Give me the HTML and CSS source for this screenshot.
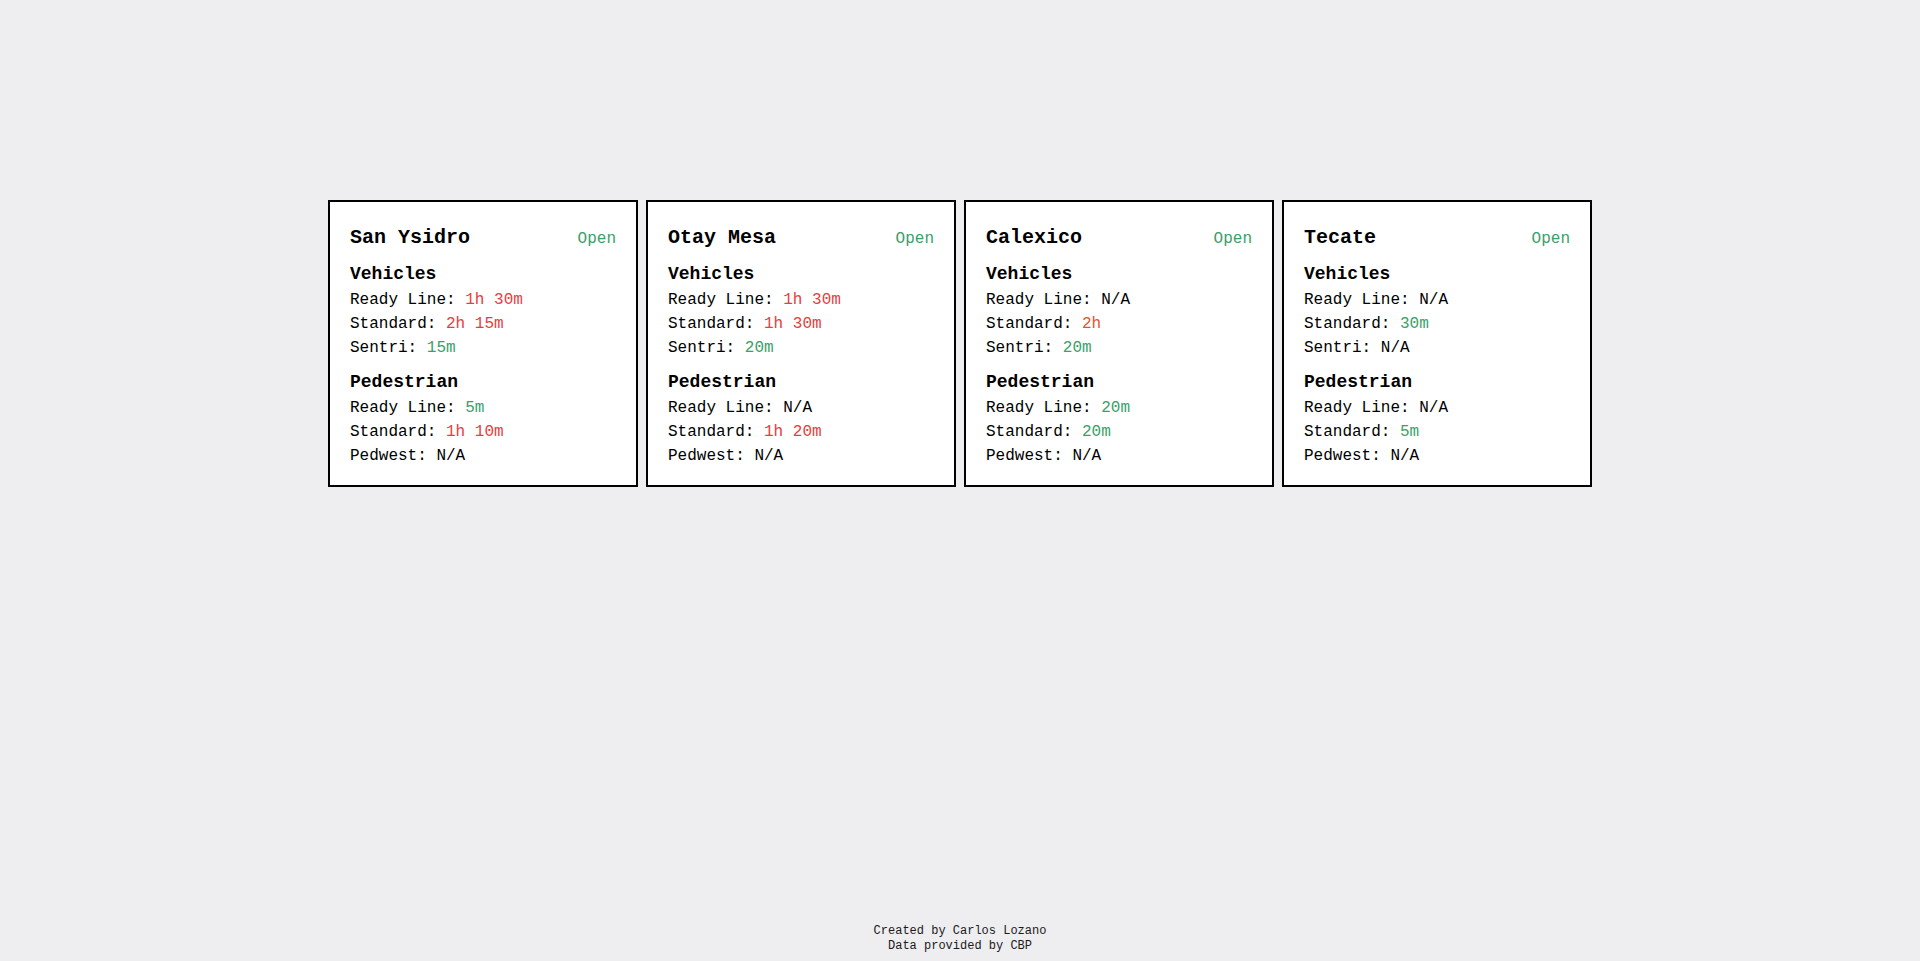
FILE: index.html
```html
<!DOCTYPE html>
<html lang="en">
<head>
<meta charset="utf-8">
<title>Border Wait Times</title>
<link rel="stylesheet" href="styles.css">
</head>
<body>
<main class="page">
  <section class="cards">
    <article class="card">
      <div class="card-head"><h2 class="port">San Ysidro</h2><span class="status">Open</span></div>
      <h3 class="group">Vehicles</h3>
      <p class="row">Ready Line: <span class="red">1h 30m</span></p>
      <p class="row">Standard: <span class="red">2h 15m</span></p>
      <p class="row">Sentri: <span class="green">15m</span></p>
      <h3 class="group">Pedestrian</h3>
      <p class="row">Ready Line: <span class="green">5m</span></p>
      <p class="row">Standard: <span class="red">1h 10m</span></p>
      <p class="row">Pedwest: N/A</p>
    </article>
    <article class="card">
      <div class="card-head"><h2 class="port">Otay Mesa</h2><span class="status">Open</span></div>
      <h3 class="group">Vehicles</h3>
      <p class="row">Ready Line: <span class="red">1h 30m</span></p>
      <p class="row">Standard: <span class="red">1h 30m</span></p>
      <p class="row">Sentri: <span class="green">20m</span></p>
      <h3 class="group">Pedestrian</h3>
      <p class="row">Ready Line: N/A</p>
      <p class="row">Standard: <span class="red">1h 20m</span></p>
      <p class="row">Pedwest: N/A</p>
    </article>
    <article class="card">
      <div class="card-head"><h2 class="port">Calexico</h2><span class="status">Open</span></div>
      <h3 class="group">Vehicles</h3>
      <p class="row">Ready Line: N/A</p>
      <p class="row">Standard: <span class="orange">2h</span></p>
      <p class="row">Sentri: <span class="green">20m</span></p>
      <h3 class="group">Pedestrian</h3>
      <p class="row">Ready Line: <span class="green">20m</span></p>
      <p class="row">Standard: <span class="green">20m</span></p>
      <p class="row">Pedwest: N/A</p>
    </article>
    <article class="card">
      <div class="card-head"><h2 class="port">Tecate</h2><span class="status">Open</span></div>
      <h3 class="group">Vehicles</h3>
      <p class="row">Ready Line: N/A</p>
      <p class="row">Standard: <span class="green">30m</span></p>
      <p class="row">Sentri: N/A</p>
      <h3 class="group">Pedestrian</h3>
      <p class="row">Ready Line: N/A</p>
      <p class="row">Standard: <span class="green">5m</span></p>
      <p class="row">Pedwest: N/A</p>
    </article>
  </section>
</main>
<footer class="footer">
  <p>Created by Carlos Lozano</p>
  <p>Data provided by CBP</p>
</footer>
</body>
</html>
```

FILE: styles.css
```css
html, body {
  margin: 0;
  padding: 0;
}
body {
  background: #eeedf0;
  color: #000;
  font-family: "Liberation Mono", "DejaVu Sans Mono", monospace;
  min-height: 100vh;
  display: flex;
  flex-direction: column;
}
.page {
  flex: 1;
  padding-top: 200px;
}
.cards {
  display: flex;
  justify-content: center;
  gap: 8px;
}
.card {
  box-sizing: border-box;
  width: 310px;
  background: #fff;
  border: 2px solid #000;
  padding: 22px 20px 17px 20px;
}
.card-head {
  display: flex;
  justify-content: space-between;
  align-items: baseline;
}
.port {
  margin: 0;
  font-size: 20px;
  line-height: 28px;
  font-weight: 700;
}
.status {
  font-size: 16px;
  color: #38a169;
}
.group {
  margin: 8px 0 0 0;
  font-size: 18px;
  line-height: 28px;
  font-weight: 700;
}
.row {
  margin: 0;
  font-size: 16px;
  line-height: 24px;
}
.red { color: #e53e3e; }
.orange { color: #e4532f; }
.green { color: #38a169; }
.footer {
  text-align: center;
  font-size: 12px;
  line-height: 15px;
  padding-bottom: 7px;
  color: #1a1a1a;
}
.footer p {
  margin: 0;
}
```
